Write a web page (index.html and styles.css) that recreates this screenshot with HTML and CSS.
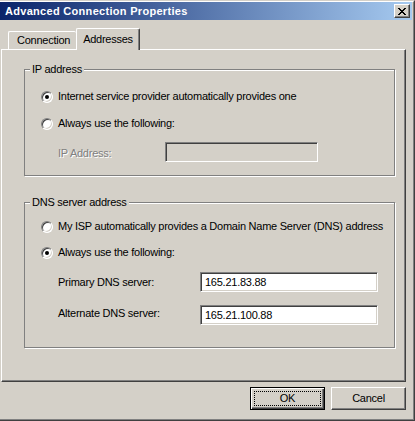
FILE: index.html
```html
<!DOCTYPE html>
<html>
<head>
<meta charset="utf-8">
<title>Advanced Connection Properties</title>
<link rel="stylesheet" href="styles.css">
</head>
<body>
<div class="window">
  <div class="frame">
    <div class="caption">
      <span class="title">Advanced Connection Properties</span>
      <button class="close" aria-label="Close">
        <svg width="8" height="7" viewBox="0 0 8 7"><path fill="#000" d="M0 0h2v1H0z M6 0h2v1H6z M1 1h2v1H1z M5 1h2v1H5z M2 2h4v1H2z M3 3h2v1H3z M2 4h4v1H2z M1 5h2v1H1z M5 5h2v1H5z M0 6h2v1H0z M6 6h2v1H6z"/></svg>
      </button>
    </div>
    <div class="body">
      <div class="tabs">
        <div class="tab">Connection</div>
        <div class="tab active">Addresses</div>
      </div>
      <div class="panel">
        <div class="group g1">
          <div class="legend">IP address</div>
          <div class="row"><span class="radio checked"></span><span>Internet service provider automatically provides one</span></div>
          <div class="row r2"><span class="radio"></span><span>Always use the following:</span></div>
          <div class="field ip">
            <span class="label disabled">IP Address:</span>
            <div class="edit off"></div>
          </div>
        </div>
        <div class="group g2">
          <div class="legend">DNS server address</div>
          <div class="row"><span class="radio"></span><span>My ISP automatically provides a Domain Name Server (DNS) address</span></div>
          <div class="row r4"><span class="radio checked"></span><span>Always use the following:</span></div>
          <div class="field dns first">
            <span class="label">Primary DNS server:</span>
            <div class="edit">165.21.83.88</div>
          </div>
          <div class="field dns second">
            <span class="label">Alternate DNS server:</span>
            <div class="edit">165.21.100.88</div>
          </div>
        </div>
      </div>
      <div class="buttons">
        <button class="btn default"><span class="focus">OK</span></button>
        <button class="btn">Cancel</button>
      </div>
    </div>
  </div>
</div>
</body>
</html>
```
FILE: styles.css
```css
html, body {
  margin: 0;
  padding: 0;
  background: #d4d0c8;
}

.window {
  width: 415px;
  height: 421px;
  box-sizing: border-box;
  background: #d4d0c8;
  border-top: 1px solid #d4d0c8;
  border-right: 1px solid #404040;
  border-bottom: 1px solid #404040;
  font-family: "Liberation Sans", Arial, sans-serif;
  font-size: 11px;
  line-height: 13px;
  letter-spacing: -0.25px;
  color: #000;
}

.frame {
  height: 100%;
  box-sizing: border-box;
  border-top: 1px solid #fff;
  border-right: 1px solid #808080;
  border-bottom: 1px solid #808080;
  padding: 0 1px 1px 0;
  display: flex;
  flex-direction: column;
}

.caption {
  height: 18px;
  flex: none;
  display: flex;
  align-items: center;
  justify-content: space-between;
  padding: 0 2px 0 5px;
  background: linear-gradient(90deg, #0a246a 0%, #a6caf0 100%);
}

.title {
  color: #fff;
  font-weight: bold;
  letter-spacing: 0.3px;
}

.close {
  width: 16px;
  height: 14px;
  box-sizing: border-box;
  padding: 0;
  margin: 0;
  display: flex;
  align-items: center;
  justify-content: center;
  background: #d4d0c8;
  border: 1px solid;
  border-color: #fff #404040 #404040 #fff;
  box-shadow: inset -1px -1px 0 #808080;
}

.close svg {
  display: block;
}

.body {
  flex: 1;
  display: flex;
  flex-direction: column;
}

.tabs {
  margin-top: 8px;
  height: 21px;
  padding-left: 8px;
  display: flex;
  align-items: flex-end;
  position: relative;
  z-index: 1;
}

.tab {
  box-sizing: border-box;
  background: #d4d0c8;
  border-top: 1px solid #fff;
  border-left: 1px solid #fff;
  border-radius: 2px 2px 0 0;
}

.tab:first-child {
  width: 68px;
  height: 18px;
  line-height: 17px;
  padding-left: 8px;
}

.tab.active {
  width: 64px;
  height: 22px;
  margin-bottom: -1px;
  padding-top: 4px;
  text-align: center;
  border-right: 1px solid #404040;
  box-shadow: inset -1px 0 0 #808080;
}

.panel {
  margin-left: 1px;
  width: 405px;
  height: 333px;
  box-sizing: border-box;
  border: 1px solid;
  border-color: #fff #404040 #404040 #fff;
  box-shadow: inset -1px -1px 0 #808080;
  display: flex;
  flex-direction: column;
  align-items: flex-start;
}

.group {
  position: relative;
  width: 371px;
  box-sizing: border-box;
  margin-left: 22px;
  border: 1px solid #808080;
  box-shadow: inset 0 1px 0 #fff, 1px 1px 0 #fff;
  display: flex;
  flex-direction: column;
}

.g1 {
  margin-top: 19px;
  padding: 20px 0 13px 0;
}

.g2 {
  margin-top: 26px;
  padding: 17px 0 22px 0;
}

.legend {
  position: absolute;
  top: -7px;
  left: 5px;
  padding: 0 2px;
  background: #d4d0c8;
}

.row {
  display: flex;
  align-items: flex-start;
  gap: 5px;
  padding-left: 16px;
  height: 13px;
}

.r2 {
  margin-top: 14px;
}

.r4 {
  margin-top: 13px;
}

.radio {
  flex: none;
  width: 12px;
  height: 12px;
  margin-top: 1px;
  box-sizing: border-box;
  border-radius: 50%;
  border: 1px solid;
  border-color: #808080 #fff #fff #808080;
  box-shadow: inset 1px 1px 0 #404040, inset -1px -1px 0 #d4d0c8;
  background: #fff;
  display: flex;
  align-items: center;
  justify-content: center;
}

.radio.checked::after {
  content: "";
  width: 4px;
  height: 4px;
  border-radius: 50%;
  background: #000;
}

.field {
  display: flex;
  align-items: flex-start;
  padding-left: 33px;
}

.field.ip {
  margin-top: 12px;
}

.field.ip .label {
  width: 107px;
  padding-top: 5px;
}

.field.dns {
  margin-top: 13px;
}

.field.dns .label {
  width: 142px;
}

.field.first .label {
  padding-top: 4px;
}

.field.second .label {
  padding-top: 2px;
}

.label.disabled {
  color: #808080;
  text-shadow: 1px 1px 0 #fff;
}

.edit {
  height: 20px;
  box-sizing: border-box;
  border: 1px solid;
  border-color: #808080 #fff #fff #808080;
  box-shadow: inset 1px 1px 0 #404040, inset -1px -1px 0 #d4d0c8;
  background: #fff;
  padding: 0 4px;
  display: flex;
  align-items: center;
}

.field.ip .edit {
  width: 153px;
}

.field.dns .edit {
  width: 178px;
}

.edit.off {
  background: #d4d0c8;
}

.buttons {
  margin-top: 5px;
  padding-right: 6px;
  display: flex;
  justify-content: flex-end;
  gap: 6px;
}

.btn {
  width: 75px;
  height: 23px;
  box-sizing: border-box;
  margin: 0;
  padding: 0;
  background: #d4d0c8;
  font: inherit;
  letter-spacing: inherit;
  color: #000;
  border: 1px solid;
  border-color: #fff #404040 #404040 #fff;
  box-shadow: inset -1px -1px 0 #808080;
  display: flex;
  align-items: center;
  justify-content: center;
}

.btn.default {
  border: 1px solid #000;
  box-shadow: inset 1px 1px 0 #fff, inset -1px -1px 0 #404040, inset -2px -2px 0 #808080;
  padding: 3px;
}

.focus {
  flex: 1;
  align-self: stretch;
  border: 1px dotted #000;
  display: flex;
  align-items: center;
  justify-content: center;
}
```
